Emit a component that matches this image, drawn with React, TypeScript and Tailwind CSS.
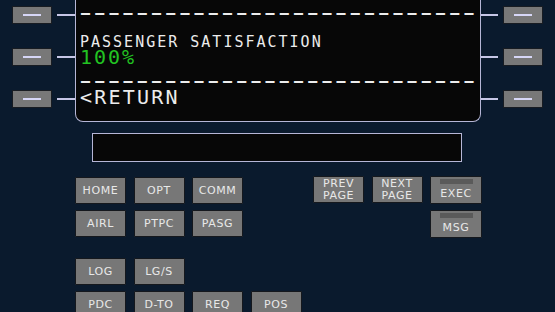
import React from "react";

const LSK = () => (
  <div className="w-[40px] h-[18px] bg-[#787878] border-[1.5px] border-[#181c22] flex items-center justify-center">
    <div className="w-[18px] h-[2px] bg-[#d6d6f6]" />
  </div>
);

const Key = ({
  label,
  bar = false,
  w = "w-[51px]",
}: {
  label: React.ReactNode;
  bar?: boolean;
  w?: string;
}) =>
  bar ? (
    <div
      className={`${w} h-[28px] bg-[#777777] border-[1.5px] border-[#15181d] rounded-[1px] flex flex-col items-center pt-[2px] font-['DejaVu_Sans',sans-serif] text-[11px] tracking-[0.6px] text-[#e8e8e8]`}
    >
      <div className="w-[33px] h-[5px] bg-[#5a5a5a]" />
      <div className="mt-[4px] leading-[11px]">{label}</div>
    </div>
  ) : (
    <div
      className={`${w} h-[27px] bg-[#777777] border-[1.5px] border-[#15181d] rounded-[1px] flex flex-col items-center justify-center font-['DejaVu_Sans',sans-serif] text-[11px] leading-[11px] tracking-[0.6px] text-[#e8e8e8]`}
    >
      {label}
    </div>
  );

const Two = ({ a, b }: { a: string; b: string }) => (
  <>
    <span className="leading-[11.5px]">{a}</span>
    <span className="leading-[11.5px]">{b}</span>
  </>
);

export default function App() {
  const dashes = "\u2013".repeat(28);
  return (
    <div className="w-[555px] h-[312px] overflow-hidden bg-[#0a1a2d]">
      {/* Top: LSKs + screen */}
      <div className="flex">
        <div className="flex flex-col gap-[24px] pt-[6px] pl-[12px]">
          {[0, 1, 2].map((i) => (
            <div key={i} className="flex items-center gap-[5px]">
              <LSK />
              <div className="w-[18px] h-[2px] bg-[#c6c6e6]" />
            </div>
          ))}
        </div>
        <div className="w-[406px] h-[122px] bg-[#070707] border-x-[1.5px] border-b-[1.5px] border-[#b6b6d6] rounded-b-[8px] pl-[4px] pt-[5.5px] font-['DejaVu_Sans_Mono',monospace] text-[#ececec] whitespace-pre">
          <div className="text-[15px] font-bold leading-[14px] tracking-[5.17px] pl-[1px]">{dashes}</div>
          <div className="mt-[17px] text-[15px] leading-[11px] tracking-[2px]">
            PASSENGER SATISFACTION
          </div>
          <div className="mt-[2px] text-[20px] leading-[14px] tracking-[2px] text-[#22c322]">
            100%
          </div>
          <div className="mt-[10px] text-[15px] font-bold leading-[14px] tracking-[5.17px] pl-[1px]">{dashes}</div>
          <div className="mt-[2.5px] text-[20px] leading-[14px] tracking-[2.2px]">&lt;RETURN</div>
        </div>
        <div className="flex flex-col gap-[24px] pt-[6px]">
          {[0, 1, 2].map((i) => (
            <div key={i} className="flex items-center gap-[5px]">
              <div className="w-[17px] h-[2px] bg-[#c6c6e6]" />
              <LSK />
            </div>
          ))}
        </div>
      </div>

      {/* Scratchpad */}
      <div className="mt-[11px] ml-[92px] w-[370px] h-[29px] bg-[#070707] border-[1.5px] border-[#b6b6d6]" />

      {/* Keys */}
      <div className="flex mt-[15px]">
        <div className="ml-[75px] flex flex-col">
          <div className="flex gap-[7.5px]">
            <Key label="HOME" />
            <Key label="OPT" />
            <Key label="COMM" />
          </div>
          <div className="flex gap-[7.5px] mt-[6px]">
            <Key label="AIRL" />
            <Key label="PTPC" />
            <Key label="PASG" />
          </div>
          <div className="flex gap-[7.5px] mt-[21px]">
            <Key label="LOG" />
            <Key label="LG/S" />
          </div>
          <div className="flex gap-[7.5px] mt-[6px]">
            <Key label="PDC" />
            <Key label="D-TO" />
            <Key label="REQ" />
            <Key label="POS" />
          </div>
        </div>
        <div className="ml-[11.5px] -mt-[1px] flex flex-col">
          <div className="flex gap-[7.5px] items-start">
            <Key label={<Two a="PREV" b="PAGE" />} />
            <Key label={<Two a="NEXT" b="PAGE" />} />
            <Key label="EXEC" bar w="w-[52px]" />
          </div>
          <div className="flex justify-end mt-[6px]">
            <Key label="MSG" bar w="w-[52px]" />
          </div>
        </div>
      </div>
    </div>
  );
}
